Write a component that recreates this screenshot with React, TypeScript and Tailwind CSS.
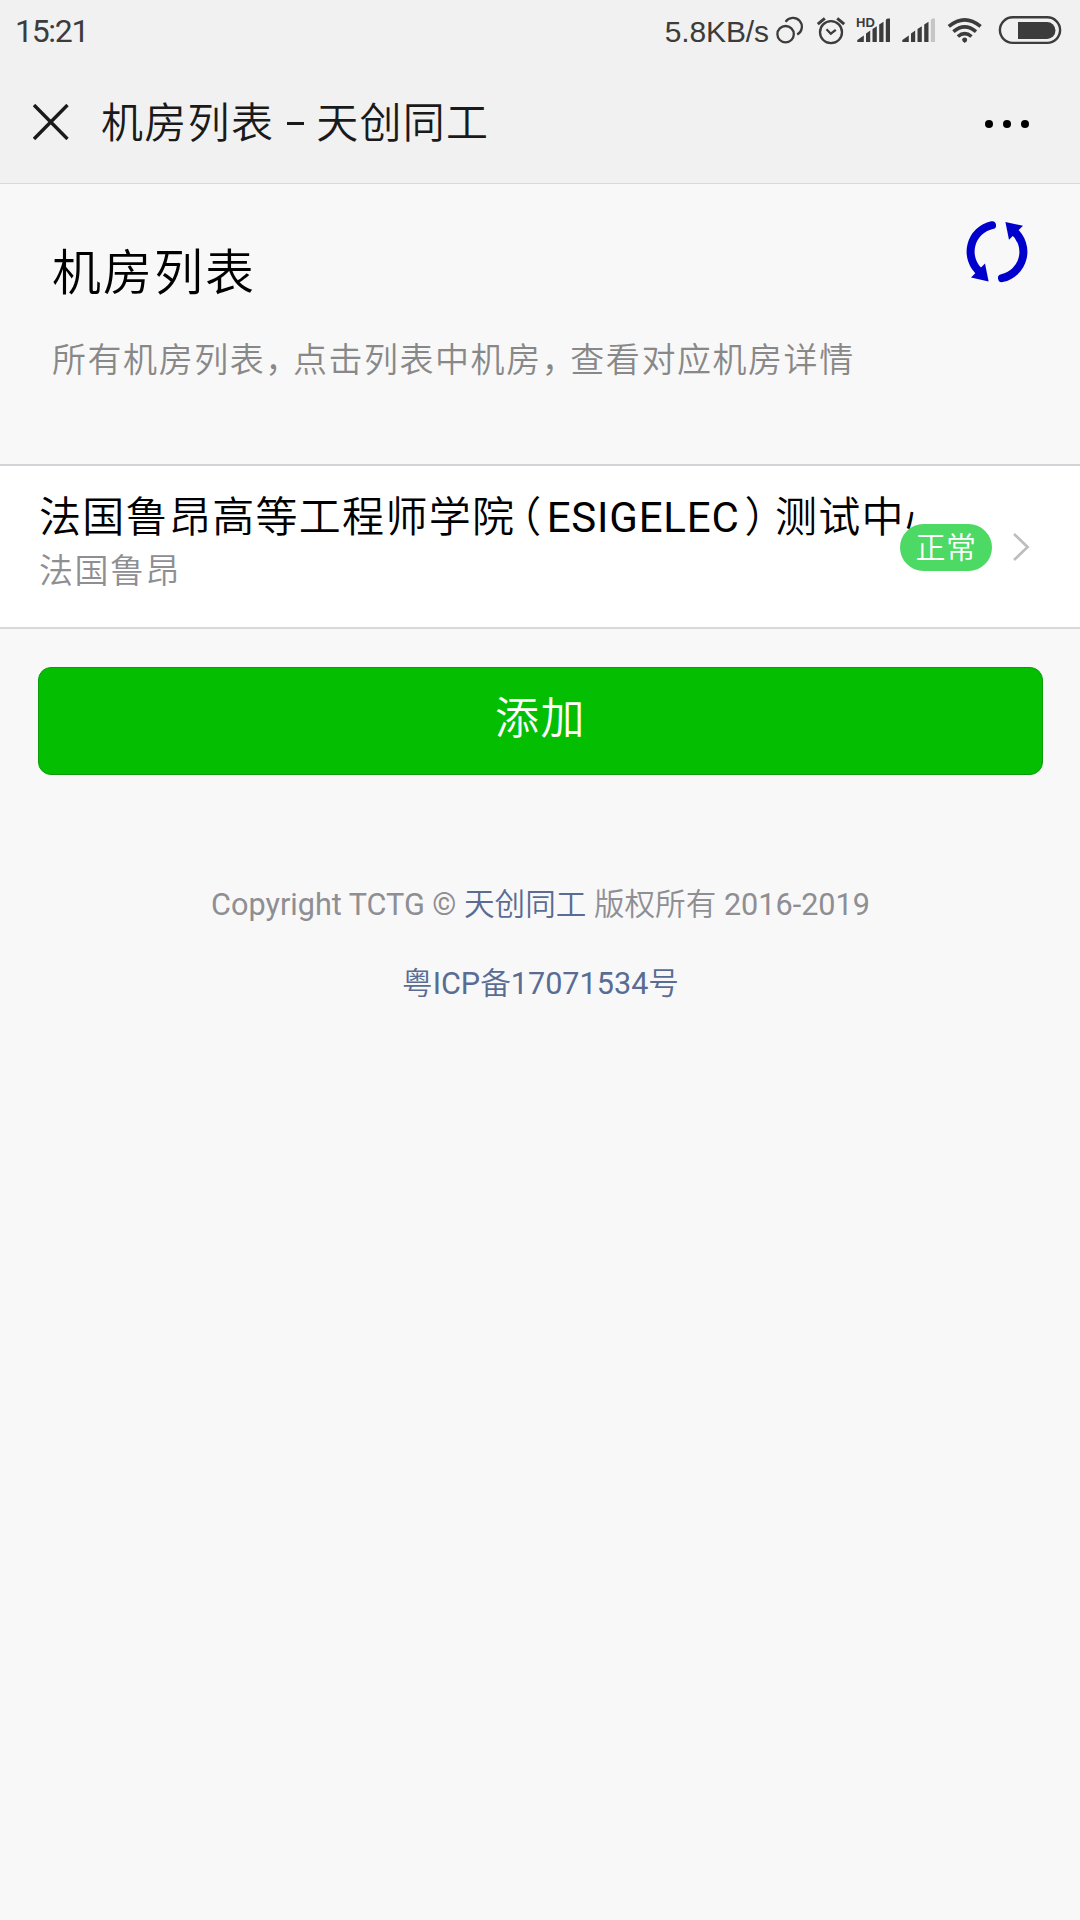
import type { ReactNode } from "react";
import clsx from "clsx";

type Room = {
  id: string;
  name: ReactNode;
  location: string;
  status: string;
};

const rooms: Room[] = [
  {
    id: "esigelec",
    name: (
      <>
        法国鲁昂高等工程师学院
        <span className="-ml-[16px]">（</span>
        <span className="ml-[4px] font-[380] tracking-[0.8px]">ESIGELEC</span>
        <span className="ml-[5px] mr-[-13px]">）</span>
        测试中心
      </>
    ),
    location: "法国鲁昂",
    status: "正常",
  },
];

const LinkIcon = () => (
  <svg className="h-[60px] w-[30px]" viewBox="0 0 30 60" fill="none" stroke="#3c3c3c" strokeWidth="2.3">
    <circle cx="11.6" cy="34.2" r="8.2" />
    <path d="M11.6 21.8 A8.9 8.9 0 1 1 23.2 34.6" />
  </svg>
);

const AlarmIcon = () => (
  <svg className="ml-[12px] h-[60px] w-[30px]" viewBox="0 0 30 60" fill="none" stroke="#3c3c3c" strokeWidth="2.3">
    <circle cx="15" cy="32.2" r="11" />
    <path d="M10.5 29.3 L14.8 33.7 L19.8 29.8" />
    <path d="M1.8 24.2 L8.8 18.4 M21.2 18.4 L28.2 24.2" strokeWidth="3" />
  </svg>
);

const SignalIcon = ({ weak, className }: { weak?: boolean; className?: string }) => (
  <svg className={clsx("h-[60px] w-[34px]", className)} viewBox="0 0 34 60" fill="#3c3c3c">
    <path d="M0.3 42 V40 L6.8 35.6 V42 Z" />
    <path d="M9 42 V33.4 L13.2 30.6 V42 Z" />
    <path d="M15.5 42 V29 L19.8 26.2 V42 Z" />
    <path d="M22.2 42 V24.6 L26.5 21.8 V42 Z" />
    <path d="M28.8 42 V20.4 Q28.8 18.5 31 18.5 H33 V42 Z" fill={weak ? "#c6c6c6" : "#3c3c3c"} />
  </svg>
);

const WifiIcon = () => (
  <svg className="ml-[11px] h-[60px] w-[36px]" viewBox="0 0 36 60" fill="none" stroke="#3c3c3c" strokeWidth="3.6">
    <path d="M1.8 26.4 Q17.7 13.2 33.6 26.4" />
    <path d="M6.4 31.6 Q17.7 22 29 31.6" />
    <path d="M10.9 36.5 Q17.7 30.6 24.5 36.5" />
    <path d="M15.2 39.4 Q17.7 36.8 20.2 39.4 L17.7 43 Z" fill="#3c3c3c" stroke="none" />
    <circle cx="17.7" cy="40" r="2.4" fill="#3c3c3c" stroke="none" />
  </svg>
);

const BatteryIcon = () => (
  <svg className="ml-[15px] h-[60px] w-[64px]" viewBox="0 0 64 60" fill="none">
    <rect x="1.9" y="17.3" width="60.2" height="25.6" rx="12.8" stroke="#3c3c3c" strokeWidth="2.4" />
    <path d="M20 22 H49 A8.5 8.5 0 0 1 49 39 H20 Z" fill="#3c3c3c" />
  </svg>
);

const RefreshIcon = () => (
  <svg className="h-[62px] w-[62px]" viewBox="0 0 62 62" fill="none">
    <g stroke="#0000cd" strokeWidth="8" strokeLinecap="round">
      <path d="M26 4.2 A27 27 0 0 0 14.5 51.5" />
      <path d="M36 57.2 A27 27 0 0 0 47.5 9.9" />
    </g>
    <path d="M22.6 60.4 L5 56.6 L19 42.6 Z" fill="#0000cd" />
    <path d="M39.4 1 L57 4.8 L43 18.8 Z" fill="#0000cd" />
  </svg>
);

const StatusBar = () => (
  <div className="flex h-[60px] items-center pl-[15px] pr-[18px] text-[#3c3c3c]">
    <span className="pt-[2px] text-[32px] font-[380] leading-[60px] tracking-[-1.3px]">15:21</span>
    <div className="ml-auto flex items-center">
      <span className="mr-[5px] pt-[3px] font-['Liberation_Sans',sans-serif] text-[30px] leading-[60px] tracking-[-0.1px]">
        5.8KB/s
      </span>
      <LinkIcon />
      <AlarmIcon />
      <div className="relative ml-[11px]">
        <span className="absolute -left-px top-[15px] font-['Liberation_Sans',sans-serif] text-[13px] font-bold leading-[15px]">
          HD
        </span>
        <SignalIcon />
      </div>
      <SignalIcon weak className="ml-[11px]" />
      <WifiIcon />
      <BatteryIcon />
    </div>
  </div>
);

const TitleBar = () => (
  <header className="flex h-[124px] items-center border-b border-[#dadada] pl-[33px] pr-[51px] text-[#1a1a1a]">
    <svg className="h-[36px] w-[36px]" viewBox="0 0 36 36" fill="none" stroke="#1a1a1a" strokeWidth="3.4">
      <path d="M1 1 L34.5 35 M34.5 1 L1 35" />
    </svg>
    <h1 className="ml-[32px] pt-[4px] text-[42px] font-[350] leading-[60px] tracking-[1.3px]">
      机房列表
      <span className="ml-[13px] mr-[12px] inline-block h-[3px] w-[17px] bg-[#1a1a1a] align-[13px]" />
      天创同工
    </h1>
    <div className="ml-auto flex gap-[10px] pt-[4px]">
      <i className="size-2 rounded-full bg-black" />
      <i className="size-2 rounded-full bg-black" />
      <i className="size-2 rounded-full bg-black" />
    </div>
  </header>
);

const RoomRow = ({ room }: { room: Room }) => (
  <a className="flex h-[165px] items-start border-y-2 border-t-[#d3d3d7] border-b-[#d9d9d9] bg-white pl-[39px]">
    <div className="w-[877px] overflow-hidden whitespace-nowrap pt-[22px]">
      <h4 className="text-[42px] font-[350] leading-[60px] tracking-[1.3px] text-black">{room.name}</h4>
      <p className="-mt-px text-[34px] font-[350] leading-[48px] tracking-[1.5px] text-[#8e8e93]">{room.location}</p>
    </div>
    <span className="relative -ml-[16px] mt-[58px] flex h-[47px] w-[92px] items-center justify-center rounded-full bg-[#4cd964] text-[30px] font-[350] leading-[46px] tracking-[0.5px] text-white">
      {room.status}
    </span>
    <svg className="ml-[20px] mt-[66px] h-[30px] w-[20px]" viewBox="0 0 20 30" fill="none" stroke="#bdbdbd" strokeWidth="2.6">
      <path d="M2 2 L15.6 15 L2 28" />
    </svg>
  </a>
);

export default function App() {
  return (
    <div className="min-h-[1920px] w-[1080px] bg-[#f8f8f8] font-[Roboto,'Noto_Sans_CJK_SC',sans-serif]">
      <div className="bg-[#f1f1f1]">
        <StatusBar />
        <TitleBar />
      </div>

      {/* page intro */}
      <section className="flex h-[280px] justify-between pl-[52px] pr-[52px]">
        <div>
          <h2 className="pt-[55px] text-[49px] font-[350] leading-[70px] tracking-[2px] text-black">机房列表</h2>
          <p className="mt-[27px] text-[34px] font-[350] leading-[48px] tracking-[1.55px] text-[#888]">
            所有机房列表<span className="mr-[-8px]">，</span>点击列表中机房<span className="mr-[-7px]">，</span>
            查看对应机房详情
          </p>
        </div>
        <div className="pt-[37px]">
          <RefreshIcon />
        </div>
      </section>

      {rooms.map((room) => (
        <RoomRow key={room.id} room={room} />
      ))}

      <div className="px-[38px] pt-[38px]">
        <button className="block h-[108px] w-[1005px] rounded-[13px] border border-[#0a9d09] bg-[#04be02] pb-[3px] text-[44px] font-[350] leading-[103px] tracking-[1.5px] text-white">
          添加
        </button>
      </div>

      <footer className="mt-[106px] pl-px text-center text-[30.6px] leading-[48px] text-[#8e8e93]">
        <p>
          Copyright TCTG © <a className="font-[350] text-[#586c94]">天创同工</a>{" "}
          <span className="font-[350]">版权所有</span> 2016-2019
        </p>
        <p className="mt-[31px] text-[#586c94]">
          <span className="font-[350]">粤</span>ICP<span className="font-[350]">备</span>17071534
          <span className="font-[350]">号</span>
        </p>
      </footer>
    </div>
  );
}
